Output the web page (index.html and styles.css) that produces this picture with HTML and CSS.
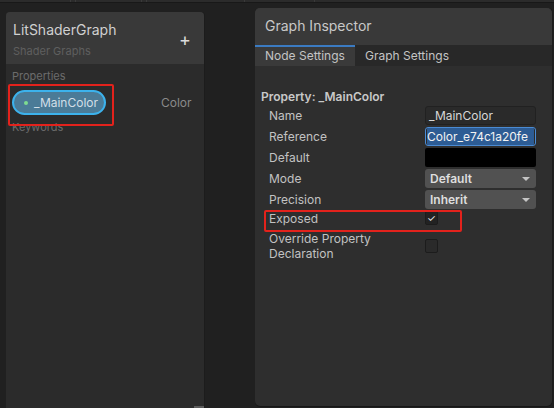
FILE: index.html
```html
<!DOCTYPE html>
<html lang="en">
<head>
    <meta charset="UTF-8">
    <title>Shader Graph - Blackboard and Inspector</title>
    <link rel="stylesheet" href="styles.css">
</head>
<body>
    <!-- toolbar strip at the very top, mostly cut off -->
    <div class="topbar">
        <span class="seg seg-1"></span>
        <span class="seg seg-2"></span>
        <span class="seg seg-3"></span>
        <span class="seg seg-4"></span>
        <span class="seg seg-5"></span>
        <span class="seg seg-6"></span>
    </div>

    <main class="workspace">
        <!-- Blackboard -->
        <section class="blackboard">
            <header class="bb-head">
                <div class="bb-titles">
                    <div class="bb-title">LitShaderGraph</div>
                    <div class="bb-sub">Shader Graphs</div>
                </div>
                <span class="bb-add">+</span>
            </header>
            <div class="bb-body">
                <div class="bb-section">Properties</div>
                <div class="bb-prop">
                    <span class="pill"><i class="dot"></i>_MainColor</span>
                    <span class="prop-type">Color</span>
                </div>
                <div class="bb-section">Keywords</div>
            </div>
            <div class="scroll-mark"></div>
            <div class="callout callout-pill"></div>
        </section>

        <!-- Graph Inspector -->
        <section class="inspector">
            <header class="gi-head">Graph Inspector</header>
            <nav class="tabs">
                <span class="tab active">Node Settings</span>
                <span class="tab">Graph Settings</span>
            </nav>
            <div class="gi-body">
                <div class="gi-heading">Property: _MainColor</div>
                <div class="fields">
                    <label>Name</label>
                    <div class="field">_MainColor</div>

                    <label>Reference</label>
                    <div class="field selected"><span>Color_e74c1a20fe</span></div>

                    <label>Default</label>
                    <div class="swatch"></div>

                    <label>Mode</label>
                    <div class="dropdown">Default<span class="arrow"></span></div>

                    <label>Precision</label>
                    <div class="dropdown">Inherit<span class="arrow"></span></div>

                    <label class="row-check">Exposed</label>
                    <div class="row-check"><span class="check on">&#10003;</span></div>

                    <label class="row-tall">Override Property<br>Declaration</label>
                    <div class="row-tall"><span class="check"></span></div>
                </div>
            </div>
            <div class="callout callout-exposed"></div>
        </section>
    </main>
</body>
</html>
```

FILE: styles.css
```css
body {
    margin: 0;
    width: 554px;
    height: 408px;
    overflow: hidden;
    background: #202020;
    font-family: Inter, 'Noto Sans', sans-serif;
    color: #c4c4c4;
}

.topbar {
    display: flex;
    height: 2px;
    background: #2b2b2b;
    border-bottom: 1px solid #181818;
}

.seg {
    border-right: 1px solid #3a3a3a;
}

.seg-1 { width: 70px; }
.seg-2 { width: 4px; }
.seg-3 { width: 65px; }
.seg-4 { width: 4px; }
.seg-5 { width: 97px; }
.seg-6 { width: 69px; }

.workspace {
    display: flex;
    align-items: flex-start;
}

/* ---------- Blackboard ---------- */
.blackboard {
    position: relative;
    margin: 9px 0 0 6px;
    width: 198px;
    height: 396px;
    background: #2b2b2b;
    border-radius: 4px 4px 0 0;
    box-shadow: 1px 0 0 #1c1c1c;
}

.bb-head {
    display: flex;
    justify-content: space-between;
    align-items: center;
    height: 52px;
    box-sizing: border-box;
    padding: 0 13px 0 7px;
    background: #393939;
    border-radius: 4px 4px 0 0;
}

.bb-titles {
    margin-top: 3px;
}

.bb-title {
    font-size: 14px;
    line-height: 17px;
    color: #d0d0d0;
}

.bb-sub {
    margin-top: 6px;
    font-size: 11px;
    line-height: 14px;
    color: #5f5f5f;
}

.bb-add {
    font-size: 18px;
    color: #dcdcdc;
    margin-top: 2px;
}

.bb-body {
    padding: 5px 0 0 6px;
}

.bb-section {
    font-size: 11px;
    line-height: 14px;
    color: #6b6b6b;
}

.bb-prop {
    display: flex;
    align-items: center;
    margin: 7px 0 5px;
}

.pill {
    display: flex;
    align-items: center;
    width: 94px;
    height: 25px;
    box-sizing: border-box;
    padding-left: 10px;
    background: #4b7b97;
    border: 2px solid #3cb2ec;
    border-radius: 13px;
    font-size: 12px;
    color: #d2dfe8;
}

.dot {
    width: 4px;
    height: 4px;
    margin-right: 6px;
    border-radius: 50%;
    background: #7edc90;
}

.prop-type {
    margin-left: 55px;
    font-size: 12px;
    color: #8a8a8a;
}

.scroll-mark {
    position: absolute;
    right: 0;
    bottom: 0;
    width: 10px;
    height: 2px;
    background: #5c5c5c;
}

/* red highlight boxes drawn over the screenshot */
.callout {
    position: absolute;
    border: 2px solid #e3221c;
    border-radius: 2px;
    box-sizing: border-box;
}

.callout-pill {
    left: 2px;
    top: 72px;
    width: 106px;
    height: 42px;
}

.callout-exposed {
    left: 9px;
    top: 202px;
    width: 198px;
    height: 22px;
}

/* ---------- Graph Inspector ---------- */
.inspector {
    position: relative;
    margin: 5px 0 0 51px;
    width: 297px;
    height: 398px;
    background: #2e2e2e;
    border-radius: 5px;
    box-shadow: 0 1px 0 #171717, 1px 0 0 #1c1c1c;
}

.gi-head {
    height: 37px;
    box-sizing: border-box;
    padding: 9px 10px 0;
    background: #393939;
    border-radius: 5px 5px 0 0;
    font-size: 14px;
    line-height: 17px;
    color: #c8c8c8;
}

.tabs {
    display: flex;
    height: 21px;
    background: #282828;
}

.tab {
    padding: 0 10px;
    font-size: 12px;
    line-height: 18px;
    color: #c4c4c4;
    border-top: 2px solid transparent;
}

.tab.active {
    width: 100px;
    box-sizing: border-box;
    background: #3a3a3a;
    border-top-color: #3b7bc2;
}

.gi-body {
    padding: 23px 16px 0 6px;
}

.gi-heading {
    font-size: 12px;
    font-weight: 600;
    line-height: 15px;
    color: #c8c8c8;
}

.fields {
    display: grid;
    grid-template-columns: 156px 111px;
    grid-template-rows: repeat(5, 19px) 17px 32px;
    row-gap: 2px;
    margin: 2px 0 0 8px;
    font-size: 12px;
}

.fields label {
    display: flex;
    align-items: center;
    color: #c2c2c2;
}

.field {
    box-sizing: border-box;
    padding: 0 3px;
    line-height: 17px;
    background: #2a2a2a;
    border: 1px solid #212121;
    border-radius: 3px;
    color: #d6d6d6;
    overflow: hidden;
    white-space: nowrap;
}

.field.selected {
    padding: 0 1px;
    border-color: #4a8bd4;
    color: #f2f2f2;
}

.field.selected span {
    background: #2d5c94;
    display: block;
}

.swatch {
    background: #000;
    border-radius: 2px;
}

.dropdown {
    position: relative;
    padding: 0 5px;
    line-height: 19px;
    background: #515151;
    border-radius: 3px;
    font-weight: 600;
    color: #dedede;
}

.arrow {
    position: absolute;
    right: 6px;
    top: 8px;
    border-left: 4px solid transparent;
    border-right: 4px solid transparent;
    border-top: 4px solid #c4c4c4;
}

.fields label.row-check {
    align-items: flex-start;
    line-height: 15px;
}

div.row-check {
    display: flex;
    align-items: flex-start;
}

.fields label.row-tall {
    align-items: flex-start;
    padding-top: 1px;
    line-height: 15px;
}

div.row-tall {
    padding-top: 9px;
}

.check {
    display: block;
    width: 13px;
    height: 14px;
    box-sizing: border-box;
    background: #2a2a2a;
    border: 1px solid #1c1c1c;
    border-radius: 2px;
    font-size: 10px;
    line-height: 12px;
    text-align: center;
    color: #ececec;
}

.check.on {
    background: #222;
}
```
